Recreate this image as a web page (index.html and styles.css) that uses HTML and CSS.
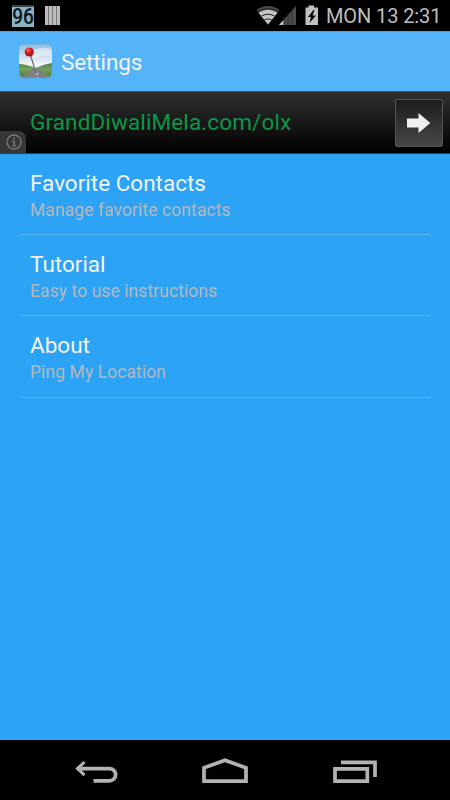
FILE: index.html
```html
<!DOCTYPE html>
<html lang="en">
<head>
<meta charset="utf-8">
<title>Settings</title>
<link rel="stylesheet" href="styles.css">
</head>
<body>
<div class="screen">
  <div class="status">
    <div class="battery-level"><span>96</span></div>
    <div class="bars"><i></i><i></i><i></i><i></i></div>
    <svg class="signals" width="64" height="22" viewBox="0 0 64 22">
      <path d="M.5 5Q12-3 23.500 5L12 19.500Z" fill="#4b4b4b"/>
      <path d="M2.500 7.800Q12 1.500 21.500 7.800L12 19.500Z" fill="#c4c4c4"/>
      <path d="M4 11.800Q12 6.600 20 11.800M7 15.600Q12 12.400 17 15.600" fill="none" stroke="#222" stroke-width="1"/>
      <path d="M0 7.500Q12-.5 24 7.500" fill="none" stroke="#111" stroke-width=".8"/>
      <path d="M23 20L40 1V20Z" fill="#4b4b4b"/>
      <path d="M23 20L27.500 15V20Z" fill="#c8c8c8"/>
      <path d="M28 12V20M32 8V20M36 4V20" stroke="#2c2c2c" stroke-width=".7"/>
      <path d="M49.500 2.500H52.500V.5H58V2.500H62V20H49.500Z" fill="#c0c0c0"/>
      <path d="M57.500 5L52 12H55L53.500 18L60 10.500H56.500L58.500 5Z" fill="#000"/>
    </svg>
    <div class="clock">MON 13 2:31</div>
  </div>
  <header class="bar">
    <svg class="app-icon" width="34" height="35" viewBox="0.5 0 34 35">
      <defs>
        <linearGradient id="sky" x2="0" y2="1"><stop offset="0" stop-color="#8fbbdc"/><stop offset=".6" stop-color="#f2f6f9"/></linearGradient>
        <linearGradient id="grass" x2="0" y2="1"><stop offset="0" stop-color="#577b4b"/><stop offset=".4" stop-color="#74a358"/><stop offset="1" stop-color="#4e7a3c"/></linearGradient>
        <radialGradient id="ball" cx=".38" cy=".3"><stop offset="0" stop-color="#ff9a92"/><stop offset=".4" stop-color="#e52b2b"/><stop offset="1" stop-color="#b8141b"/></radialGradient>
        <clipPath id="tile"><rect x=".5" y=".5" width="33" height="33" rx="5"/></clipPath>
      </defs>
      <rect x=".5" y="1.2" width="33" height="33" rx="5" fill="#467899" opacity=".6"/>
      <g clip-path="url(#tile)">
        <rect width="34" height="34" fill="url(#sky)"/>
        <path d="M13 7Q23 1 33 5V12Q22 10 14 17Z" fill="#fff" opacity=".45"/>
        <path d="M0 20Q7 20 17 24Q26 20 34 19V34H0Z" fill="url(#grass)"/>
        <path d="M15 24H20L32 34H3Z" fill="#808080"/>
        <path d="M18.500 29L18.700 34" stroke="#ddd" stroke-width="1.2" stroke-dasharray="2 2"/>
        <path d="M12 11L17.500 29" stroke="#687278" stroke-width="1.3"/>
      </g>
      <circle cx="10.800" cy="8" r="4.600" fill="url(#ball)"/>
    </svg>
    <h1 class="title">Settings</h1>
  </header>
  <div class="ad">
    <span class="ad-text">GrandDiwaliMela.com/olx</span>
    <span class="ad-button">
      <svg width="24" height="22" viewBox="0 0 24 22"><path d="M0 6.500H11.500V1L23.300 11L11.500 21V15.500H0Z" fill="#f0f0f0"/></svg>
    </span>
    <span class="ad-info">
      <svg width="16" height="16" viewBox="0 0 16 16"><circle cx="8" cy="8" r="7" fill="none" stroke="#777" stroke-width="1.3"/><path d="M8 3.500V5.300M6.500 7H8.200V12M6.500 12H9.800" fill="none" stroke="#707070" stroke-width="1.700"/></svg>
    </span>
  </div>
  <main class="list">
    <div class="item"><div class="name">Favorite Contacts</div><div class="desc">Manage favorite contacts</div></div>
    <div class="item"><div class="name">Tutorial</div><div class="desc">Easy to use instructions</div></div>
    <div class="item"><div class="name">About</div><div class="desc">Ping My Location</div></div>
  </main>
  <nav class="nav">
    <svg width="450" height="60" viewBox="0 0 450 60" fill="none" stroke="#b3b3b3" stroke-width="3.700">
      <path d="M77 28.600H109.500A6.100 6.100 0 0 1 109.500 40.800H93.500"/>
      <path d="M84.500 22L77.500 28.600L84.500 35.200" stroke-width="3"/>
      <path d="M204 41.200V27.800L225 20.300L246 27.800V41.200Z"/>
      <path d="M335 28.800H367.300V41.200H335Z"/>
      <path d="M341 22.300H375V37"/>
    </svg>
  </nav>
</div>
</body>
</html>
```
FILE: styles.css
```css
* { box-sizing: border-box; }
body { margin: 0; background: #000; font-family: Roboto, sans-serif; }
.screen { width: 450px; height: 800px; display: flex; flex-direction: column; background: #2ca3f5; overflow: hidden; }
.status { height: 31px; background: #000; display: flex; flex: none; padding-left: 12px; }
.battery-level { width: 22px; height: 22px; margin-top: 5px; background: #8ab0c2; border-top: 2px solid #35454d; color: #07131c; font: 500 19px/20px Roboto, sans-serif; text-align: center; }
.battery-level span { display: block; transform: scaleY(1.12); }
.bars { display: flex; gap: 1px; margin: 6px 0 0 11px; height: 19px; background: #777; }
.bars i { width: 3px; background: #bcbcbc; }
.signals { margin: 5px 0 0 196px; }
.clock { margin-left: 6px; font-size: 20px; letter-spacing: -.1px; line-height: 33px; color: #bebebe; white-space: nowrap; }
.bar { height: 60px; background: #55b4f8; display: flex; flex: none; padding-left: 19px; border-top: 1px solid #4aa0dd; }
.app-icon { margin-top: 12px; }
.title { margin: 0 0 0 8px; font-size: 22.5px; font-weight: 400; letter-spacing: -.1px; line-height: 60px; color: #f3f3f3; }
.ad { height: 63px; flex: none; position: relative; display: flex; justify-content: space-between; padding: 7px 7px 0 30px; background: linear-gradient(#303030, #000); border-top: 1px solid #345a75; border-bottom: 1px solid #174565; }
.ad-text { font-size: 22.5px; letter-spacing: .12px; line-height: 46px; color: #0c9647; }
.ad-button { width: 48px; height: 48px; border: 1px solid #555; border-radius: 2px; background: linear-gradient(#1c1c1c, #484848); display: flex; align-items: center; justify-content: center; }
.ad-info { position: absolute; left: 0; bottom: 0; width: 26px; height: 22px; background: #373737; border-radius: 0 7px 0 0; padding: 3px 0 0 6px; }
.ad-info svg { display: block; }
.list { flex: 1; padding: 0 20px; }
.item { height: 81px; border-bottom: 1px solid #55b4f8; padding: 15px 10px 0; white-space: nowrap; }
.item + .item { height: 81.3px; }
.name { font-size: 22.5px; line-height: 28px; color: #f3f3f3; }
.desc { font-size: 17.5px; letter-spacing: .08px; line-height: 26px; color: #b3b9bf; }
.nav { height: 60px; flex: none; background: #000; }
.nav svg { display: block; }
```
